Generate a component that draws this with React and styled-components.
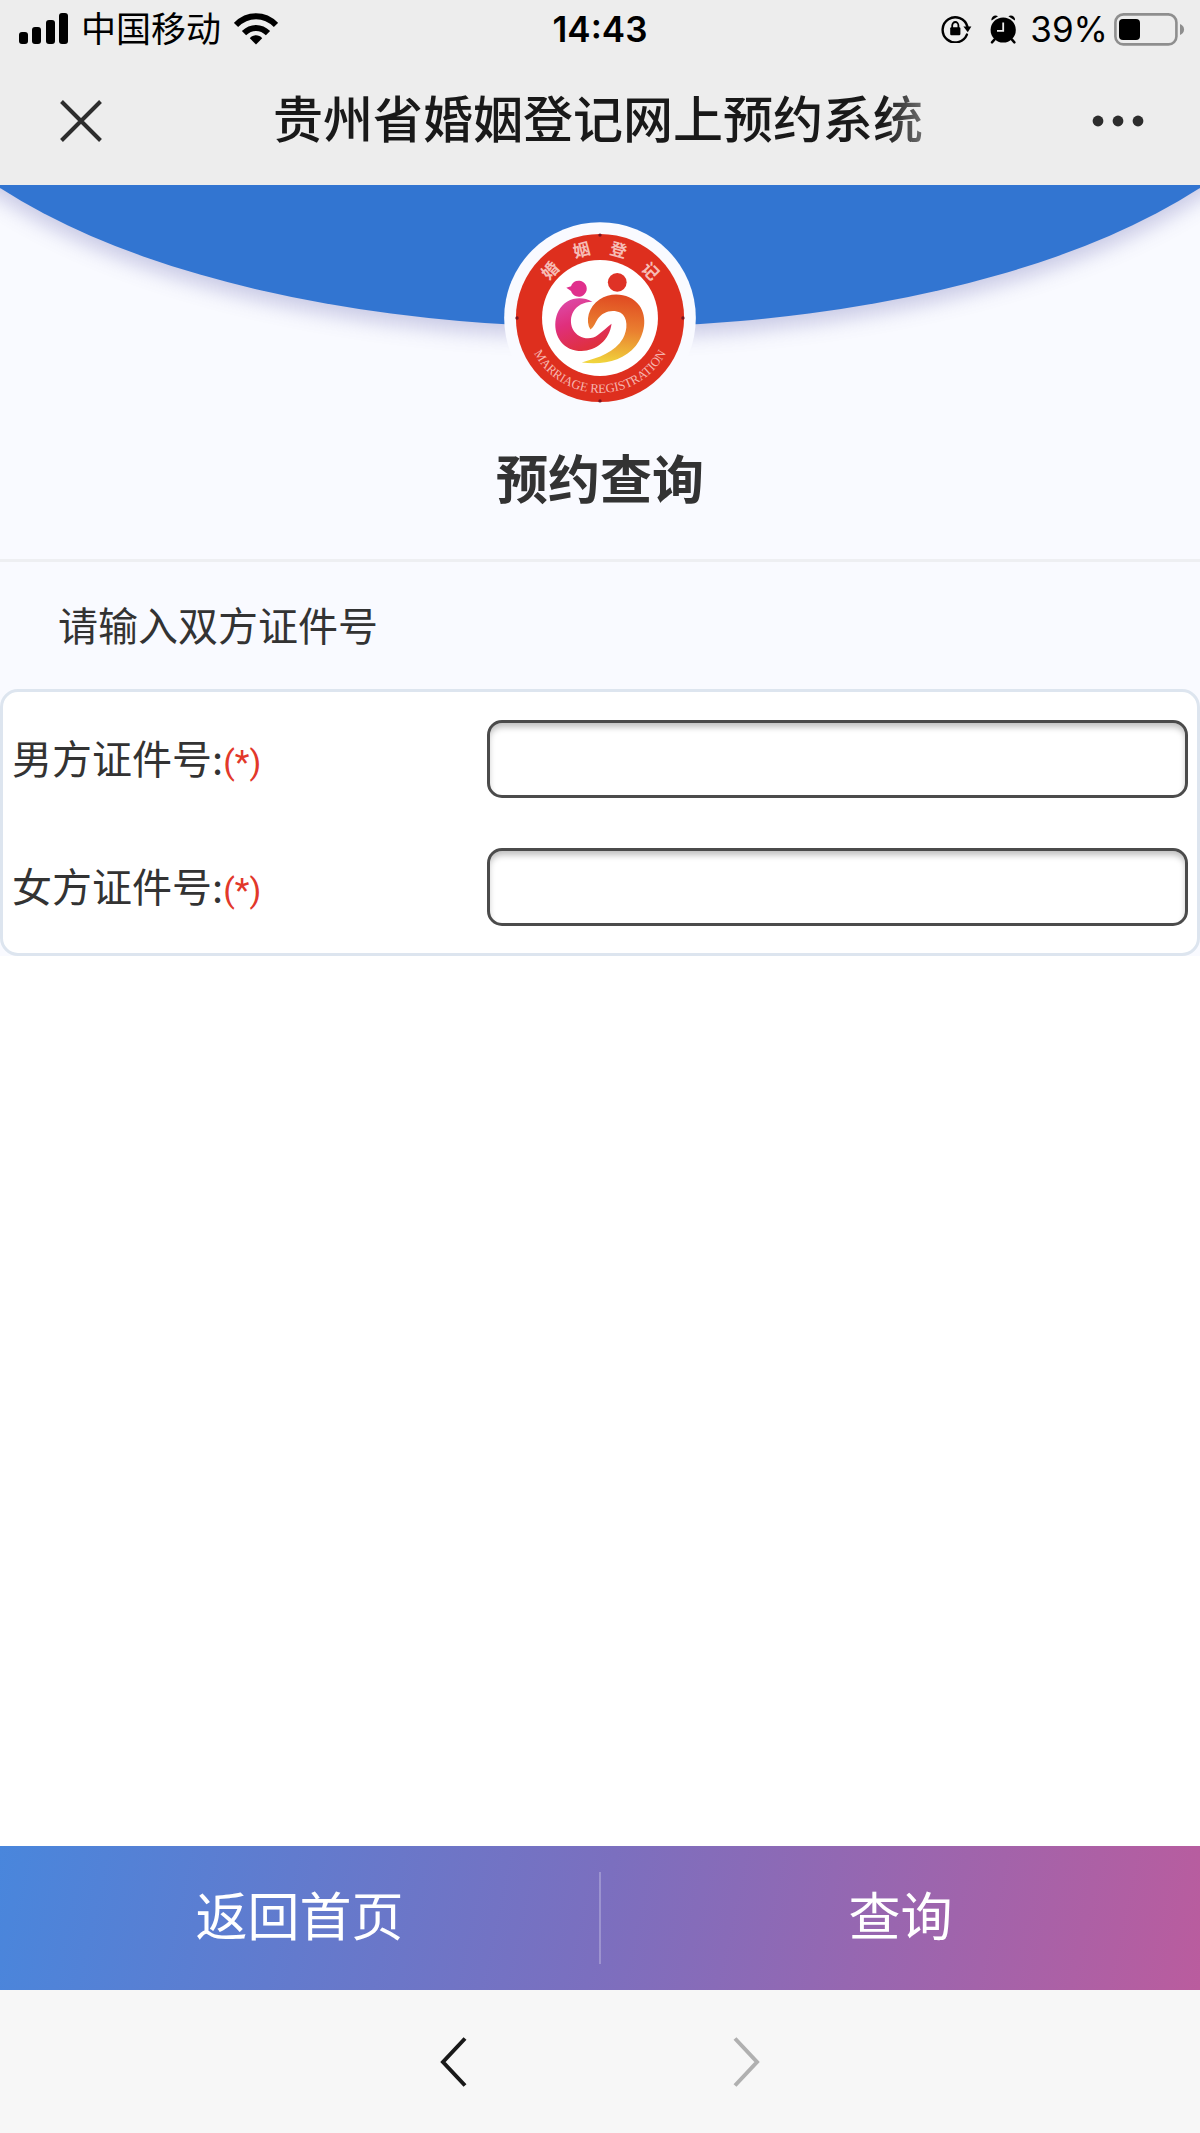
import { useState } from 'react';
import styled, { createGlobalStyle } from 'styled-components';

const GlobalStyle = createGlobalStyle`
  * {
    box-sizing: border-box;
  }

  body {
    margin: 0;
    background-color: #fff;
    color: #333;
    font-family: 'Noto Sans CJK SC', 'Liberation Sans', sans-serif;
  }

  button {
    padding: 0;
    border: none;
    background: none;
    color: inherit;
    font-family: inherit;
    cursor: pointer;
  }

  svg {
    display: block;
    flex: none;
  }
`;

const Page = styled.div`
  min-height: 100vh;
  display: flex;
  flex-direction: column;
`;

const StatusBar = styled.div`
  height: 58px;
  padding: 0 15px;
  display: grid;
  grid-template-columns: 1fr auto 1fr;
  align-items: center;
  background-color: #ededed;
  color: #000;
`;

const StatusGroup = styled.div`
  display: flex;
  align-items: center;
  justify-content: ${(p) => (p.$end ? 'flex-end' : 'flex-start')};
  gap: ${(p) => p.$gap}px;
`;

const StatusText = styled.span`
  font-family: Inter, 'Noto Sans CJK SC', sans-serif;
  font-size: 35px;
  font-weight: ${(p) => (p.$strong ? 600 : 400)};
  line-height: 42px;
`;

const NavBar = styled.header`
  height: 127px;
  padding: 0 56px 2px 52px;
  display: grid;
  grid-template-columns: 1fr auto 1fr;
  align-items: center;
  background-color: #ededed;
`;

const NavTitle = styled.h1`
  margin: 0;
  font-family: 'Liberation Sans', 'Noto Sans CJK SC', sans-serif;
  font-size: 50px;
  font-weight: 500;
  line-height: 60px;
  color: #191919;
  mask-image: linear-gradient(to left, rgba(0, 0, 0, 0.6), #000 40px);
`;

const IconButton = styled.button`
  justify-self: ${(p) => p.$side || 'center'};
  color: ${(p) => p.$color || '#2d2d2d'};
`;

const Content = styled.main`
  flex: 1;
`;

const Hero = styled.section`
  position: relative;
  overflow: hidden;
  height: 377px;
  padding-top: 37px;
  display: flex;
  flex-direction: column;
  align-items: center;
  background-color: #f9faff;
  border-bottom: 3px solid #eeeff2;

  &::before {
    content: '';
    position: absolute;
    left: -10%;
    bottom: 232px;
    width: 120%;
    height: 622px;
    border-radius: 50%;
    background-color: #3275d1;
    box-shadow: 0 10px 20px rgba(90, 90, 170, 0.3);
  }
`;

const Emblem = styled.svg`
  position: relative;
  width: 192px;
  height: 192px;
`;

const HeroTitle = styled.h2`
  margin: 33px 0 0;
  font-size: 52px;
  font-weight: 700;
  line-height: 60px;
`;

const FormArea = styled.form`
  background-color: #f9faff;
`;

const Hint = styled.p`
  margin: 0;
  padding: 0 58px 2px;
  font-size: 40px;
  line-height: 125px;
`;

const Card = styled.div`
  padding: 28px 9px 27px;
  display: flex;
  flex-direction: column;
  gap: 50px;
  background-color: #fff;
  border: 3px solid #dde5ef;
  border-radius: 18px;
`;

const Field = styled.div`
  display: grid;
  grid-template-columns: 475px 1fr;
  align-items: center;
`;

const Label = styled.label`
  font-size: 40px;
  line-height: 60px;
`;

const Required = styled.span`
  font-family: Roboto, sans-serif;
  font-size: 34px;
  color: #e2382a;
`;

const TextInput = styled.input`
  width: 100%;
  height: 78px;
  padding: 0 16px;
  font-size: 40px;
  color: #333;
  background-color: #fff;
  border: 3px solid #4b4b4b;
  border-radius: 15px;
  box-shadow: inset 0 5px 6px -1px rgba(0, 0, 0, 0.25);
  outline: none;
`;

const ActionBar = styled.div`
  height: 144px;
  display: flex;
  align-items: center;
  background: linear-gradient(102deg, #4986dc, #7b6fbf 50%, #ba5c9e);
`;

const ActionButton = styled.button`
  flex: 1;
  height: 100%;
  font-family: 'Liberation Sans', 'Noto Sans CJK SC', sans-serif;
  font-size: 52px;
  line-height: 60px;
  color: #fff;
`;

const Divider = styled.span`
  width: 2px;
  height: 92px;
  background-color: rgba(255, 255, 255, 0.25);
`;

const Toolbar = styled.nav`
  height: 143px;
  display: flex;
  align-items: center;
  justify-content: center;
  gap: 265px;
  background-color: #f7f7f7;
`;

const SignalIcon = () => (
  <svg width="53" height="32" viewBox="-4 0 53 32">
    <rect x="0" y="19" width="9" height="12" rx="3" />
    <rect x="13" y="14" width="9" height="17" rx="3" />
    <rect x="27" y="7" width="9" height="24" rx="3" />
    <rect x="40" y="0" width="9" height="31" rx="3" />
  </svg>
);

const WifiIcon = () => (
  <svg width="44" height="32" viewBox="0 0 44 32">
    <g fill="none" stroke="#000" strokeWidth="6">
      <path d="M2 12C13.5 0.4 30.5 0.4 42 12" />
      <path d="M10 20.2C17 13.2 27 13.2 34 20.2" />
    </g>
    <path d="M22 31.5L15.8 25.2C19.2 21.4 24.8 21.4 28.2 25.2Z" />
  </svg>
);

const RotationLockIcon = () => (
  <svg width="31" height="28" viewBox="0 0 31 28">
    <path
      d="M25.9 19.6A12.6 12.6 0 1 1 26.4 11.6"
      fill="none"
      stroke="#000"
      strokeWidth="2.4"
      strokeLinecap="round"
    />
    <path d="M22.4 11.6H30.4L26.8 17.2Z" />
    <rect x="9.2" y="12.2" width="10.2" height="8" rx="1.2" />
    <path d="M11.2 13V10.4A3.1 3.4 0 0 1 17.4 10.4V13" fill="none" stroke="#000" strokeWidth="1.8" />
  </svg>
);

const AlarmIcon = () => (
  <svg width="27" height="29" viewBox="0 0 27 29">
    <circle cx="13.2" cy="15" r="12.6" />
    <path d="M1.6 5.6C0.4 2.4 4.6 -1.2 8 1.2Z" />
    <path d="M24.8 5.6C26 2.4 21.8 -1.2 18.4 1.2Z" />
    <path d="M4.4 24.6L2 27.4M22 24.6L24.4 27.4" stroke="#000" strokeWidth="2.4" strokeLinecap="round" />
    <path d="M13.2 7.4V15.8H7" fill="none" stroke="#ededed" strokeWidth="1.8" />
  </svg>
);

const BatteryIcon = () => (
  <svg width="71" height="33" viewBox="0 0 71 33">
    <rect x="1.4" y="1.4" width="61" height="30" rx="8" fill="none" stroke="#8e8e8e" strokeWidth="2.6" />
    <rect x="5" y="6" width="21" height="21" rx="4" />
    <path d="M66 11C71.4 13 71.4 20 66 22Z" fill="#8e8e8e" />
  </svg>
);

const MarriageEmblem = () => (
  <Emblem viewBox="42 37 573 573" role="img" aria-label="婚姻登记">
    <defs>
      <linearGradient id="pinkBody" x1="0" y1="0" x2="0.4" y2="1">
        <stop offset="0" stopColor="#dc4fb0" />
        <stop offset="0.5" stopColor="#e02f7c" />
        <stop offset="1" stopColor="#df3040" />
      </linearGradient>
      <linearGradient id="orangeBody" x1="0.5" y1="0" x2="0.4" y2="1">
        <stop offset="0" stopColor="#e04a22" />
        <stop offset="0.5" stopColor="#ea8030" />
        <stop offset="1" stopColor="#f0d43c" />
      </linearGradient>
      <path id="ringBottom" d="M105 323.5A223.5 223.5 0 0 0 552 323.5" />
    </defs>
    <circle cx="328.5" cy="323.5" r="286" fill="#f9faff" />
    <circle cx="328.5" cy="323.5" r="251" fill="#de2f1e" />
    <circle cx="328.5" cy="323.5" r="173" fill="#fff" />
    <g fill="#7c1620">
      <circle cx="328.5" cy="76" r="5" />
      <circle cx="328.5" cy="571" r="5" />
      <circle cx="81" cy="323.5" r="5" />
      <circle cx="576" cy="323.5" r="5" />
    </g>
    <g
      fill="#f6bdb6"
      fontFamily="'Noto Sans CJK SC', sans-serif"
      fontSize="50"
      fontWeight="700"
      textAnchor="middle"
    >
      <text transform="translate(193 194) rotate(-46)">婚</text>
      <text transform="translate(278 138) rotate(-15)">姻</text>
      <text transform="translate(379 138) rotate(15)">登</text>
      <text transform="translate(466 196) rotate(46)">记</text>
    </g>
    <text
      fill="#f6b5ae"
      fontFamily="'Liberation Serif', serif"
      fontSize="38"
      textAnchor="middle"
    >
      <textPath href="#ringBottom" startOffset="50%">
        MARRIAGE REGISTRATION
      </textPath>
    </text>
    <path d="M228 233L242 229A24 24 0 1 1 242 243Z" fill="#e02f8c" />
    <circle cx="380" cy="217" r="28" fill="#df3226" />
    <path
      d="M306 275C268 254 224 266 205 302C184 343 197 396 238 415C292 438 355 404 363 341C349 352 336 364 322 374C301 391 262 386 247 356C232 322 250 276 306 275Z"
      fill="url(#pinkBody)"
    />
    <path
      d="M300 358C284 332 294 290 327 268C365 243 420 251 446 286C471 322 462 372 435 407C398 452 338 464 274 456C325 443 374 425 397 385C412 358 412 322 390 308C365 295 335 306 322 326C315 337 311 350 300 358Z"
      fill="url(#orangeBody)"
    />
  </Emblem>
);

const App = () => {
  const [form, setForm] = useState({ maleId: '', femaleId: '' });

  const handleChange = (e) => {
    setForm({ ...form, [e.target.name]: e.target.value });
  };

  const handleSubmit = (e) => {
    e.preventDefault();
  };

  return (
    <Page>
      <GlobalStyle />
      <StatusBar>
        <StatusGroup $gap={13}>
          <SignalIcon />
          <StatusText>中国移动</StatusText>
          <WifiIcon />
        </StatusGroup>
        <StatusText $strong>14:43</StatusText>
        <StatusGroup $end $gap={13}>
          <StatusGroup $gap={18}>
            <RotationLockIcon />
            <AlarmIcon />
          </StatusGroup>
          <StatusGroup $gap={6}>
            <StatusText>39%</StatusText>
            <BatteryIcon />
          </StatusGroup>
        </StatusGroup>
      </StatusBar>

      <NavBar>
        <IconButton type="button" aria-label="关闭" $side="start">
          <svg width="58" height="42" viewBox="0 0 58 42">
            <path d="M9.5 1.5L48.5 40.5M48.5 1.5L9.5 40.5" stroke="currentColor" strokeWidth="4" />
          </svg>
        </IconButton>
        <NavTitle>贵州省婚姻登记网上预约系统</NavTitle>
        <IconButton type="button" aria-label="更多" $side="end">
          <svg width="52" height="12" viewBox="0 0 52 12" fill="currentColor">
            <circle cx="6" cy="6" r="5.4" />
            <circle cx="26" cy="6" r="5.4" />
            <circle cx="46" cy="6" r="5.4" />
          </svg>
        </IconButton>
      </NavBar>

      <Content>
        <Hero>
          <MarriageEmblem />
          <HeroTitle>预约查询</HeroTitle>
        </Hero>
        <FormArea id="queryForm" onSubmit={handleSubmit}>
          <Hint>请输入双方证件号</Hint>
          <Card>
            <Field>
              <Label htmlFor="maleId">
                男方证件号:<Required>(*)</Required>
              </Label>
              <TextInput id="maleId" name="maleId" value={form.maleId} onChange={handleChange} />
            </Field>
            <Field>
              <Label htmlFor="femaleId">
                女方证件号:<Required>(*)</Required>
              </Label>
              <TextInput id="femaleId" name="femaleId" value={form.femaleId} onChange={handleChange} />
            </Field>
          </Card>
        </FormArea>
      </Content>

      <ActionBar>
        <ActionButton type="button">返回首页</ActionButton>
        <Divider />
        <ActionButton type="submit" form="queryForm">
          查询
        </ActionButton>
      </ActionBar>

      <Toolbar>
        <IconButton type="button" aria-label="后退" $color="#191919">
          <svg width="28" height="50" viewBox="0 0 28 50">
            <path d="M25 1.5L3 25L25 48.5" fill="none" stroke="currentColor" strokeWidth="4" />
          </svg>
        </IconButton>
        <IconButton type="button" aria-label="前进" $color="#b0b0b0">
          <svg width="28" height="50" viewBox="0 0 28 50">
            <path d="M2 1.5L24 25L2 48.5" fill="none" stroke="currentColor" strokeWidth="4" />
          </svg>
        </IconButton>
      </Toolbar>
    </Page>
  );
};

export default App;
